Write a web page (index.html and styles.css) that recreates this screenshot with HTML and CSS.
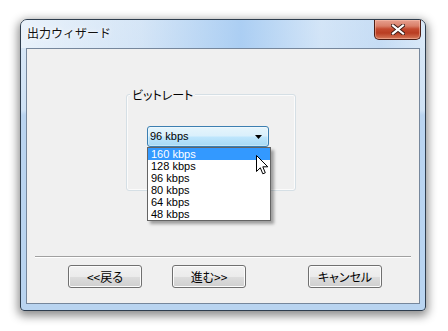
FILE: index.html
```html
<!DOCTYPE html>
<html lang="ja">
<head>
<meta charset="utf-8">
<link rel="stylesheet" href="styles.css">
</head>
<body>
<div class="window">
  <div class="titlebar">
    <span class="title">出力ウィザード</span>
    <div class="close">
      <svg width="14" height="11" viewBox="0 0 14 11">
        <path d="M2 1.5 L12 9.5 M12 1.5 L2 9.5" stroke="#3b1a14" stroke-width="4" stroke-linecap="square"/>
        <path d="M2 1.5 L12 9.5 M12 1.5 L2 9.5" stroke="#ffffff" stroke-width="2.2" stroke-linecap="square"/>
      </svg>
    </div>
  </div>
  <div class="client">
    <div class="group">
      <div class="legend">ビットレート</div>
      <div class="combo">
        <span class="combo-text">96 kbps</span>
        <svg class="arrow" width="7" height="4" viewBox="0 0 7 4"><path d="M0 0 H7 L3.5 4 Z" fill="#000"/></svg>
      </div>
    </div>
    <div class="sep"></div>
    <div class="buttons">
      <div class="btn back">&lt;&lt;戻る</div>
      <div class="btn next">進む&gt;&gt;</div>
      <div class="btn cancel">キャンセル</div>
    </div>
    <ul class="droplist">
      <li class="sel">160 kbps</li>
      <li>128 kbps</li>
      <li>96 kbps</li>
      <li>80 kbps</li>
      <li>64 kbps</li>
      <li>48 kbps</li>
    </ul>
    <svg class="cursor" width="13" height="20" viewBox="0 0 13 20">
      <path d="M0.5 0.5 L0.5 16.5 L4.3 12.8 L6.8 18.8 L9.3 17.8 L6.8 11.8 L11.8 11.8 Z" fill="#fff" stroke="#000" stroke-width="1" stroke-linejoin="miter"/>
    </svg>
  </div>
</div>
</body>
</html>
```
FILE: styles.css
```css
html, body {
  margin: 0;
  padding: 0;
  background: #ffffff;
}
body {
  width: 448px;
  height: 331px;
  overflow: hidden;
  font-family: "Liberation Sans", "Noto Sans CJK JP", sans-serif;
  font-size: 12px;
}
.window {
  box-sizing: border-box;
  width: 406px;
  height: 292px;
  margin: 19px 0 0 20px;
  border: 1px solid #2e3d4e;
  border-radius: 7px 7px 4px 4px;
  padding: 0 5px 6px 5px;
  background: linear-gradient(to bottom, #dae8f6 0px, #cfe2f5 90px, #bad4f0 95px, #b9d4f0 100%);
  box-shadow: 0 3px 10px 2px rgba(0, 0, 0, 0.45);
  display: flex;
  flex-direction: column;
}
.titlebar {
  height: 28px;
  margin: 0 -5px;
  padding: 0 4px 0 6px;
  display: flex;
  justify-content: space-between;
  align-items: flex-start;
  border-radius: 6px 6px 0 0;
  background: linear-gradient(to right, rgba(238,245,252,0.75) 0px, rgba(205,225,247,0.35) 120px, rgba(160,200,242,0.8) 220px, rgba(205,226,248,0.5) 300px, rgba(180,210,243,0.5) 360px, rgba(220,235,250,0.5) 404px);
}
.title {
  padding-top: 6px;
  line-height: 14px;
  font-family: "Noto Sans CJK JP", sans-serif;
  font-size: 12px;
  color: #111111;
  text-shadow: 0 0 6px #ffffff, 0 0 3px #ffffff;
}
.close {
  box-sizing: border-box;
  width: 47px;
  height: 20px;
  border: 1px solid #4d1d14;
  border-top: none;
  border-radius: 0 0 5px 5px;
  background: linear-gradient(to bottom, #e7a090 0px, #d97f69 6px, #c44a2f 9px, #b93d22 13px, #cc6446 17px, #de8c6f 20px);
  box-shadow: inset 0 0 0 1px rgba(255, 200, 180, 0.45);
  display: flex;
  align-items: center;
  justify-content: center;
}
.close svg {
  margin-top: -1px;
}
.client {
  position: relative;
  box-sizing: border-box;
  height: 256px;
  border: 1px solid #76879c;
  background: #f0f0f0;
  display: flex;
  flex-direction: column;
}
.group {
  box-sizing: border-box;
  width: 170px;
  height: 97px;
  margin: 45px 0 0 99px;
  border: 1px solid #d5dfe5;
  border-radius: 3px;
  box-shadow: inset 0 0 0 1px #fbfbfb;
  display: flex;
  flex-direction: column;
  align-items: flex-start;
}
.legend {
  margin: -7px 0 0 3px;
  padding: 0 2px;
  line-height: 13px;
  height: 13px;
  background: #f0f0f0;
  font-family: "Noto Sans CJK JP", sans-serif;
  font-size: 12px;
  font-feature-settings: "palt";
  color: #000;
}
.combo {
  box-sizing: border-box;
  width: 122px;
  height: 21px;
  margin: 25px 0 0 20px;
  border: 1px solid #3c7fb1;
  border-radius: 3px;
  background: linear-gradient(to bottom, #e6f5fc 0px, #d9f0fc 9px, #bee6fd 10px, #a6d9f4 19px);
  box-shadow: inset 0 0 0 1px rgba(255,255,255,0.35);
  display: flex;
  align-items: center;
  justify-content: space-between;
  padding: 0 6px 0 2px;
}
.combo-text {
  color: #000;
  font-size: 11px;
  line-height: 13px;
}
.sep {
  height: 1px;
  margin: 65px 8px 0 8px;
  background: #a0a0a0;
  border-bottom: 1px solid #ffffff;
}
.buttons {
  display: flex;
  margin-top: 7px;
  padding-left: 41px;
}
.btn {
  box-sizing: border-box;
  width: 74px;
  height: 23px;
  border: 1px solid #707070;
  border-radius: 3px;
  background: linear-gradient(to bottom, #f2f2f2 0%, #ebebeb 50%, #dddddd 51%, #cfcfcf 100%);
  box-shadow: inset 0 0 0 1px #fcfcfc;
  display: flex;
  align-items: center;
  justify-content: center;
  font-family: "Noto Sans CJK JP", sans-serif;
  font-size: 12px;
  font-feature-settings: "palt";
  color: #000;
  line-height: 14px;
}
.next {
  margin-left: 30px;
}
.cancel {
  margin-left: 62px;
}
.droplist {
  position: absolute;
  left: 120px;
  top: 98px;
  box-sizing: border-box;
  width: 124px;
  height: 74px;
  margin: 0;
  padding: 0;
  list-style: none;
  border: 1px solid #646464;
  background: #ffffff;
  box-shadow: 3px 3px 3px rgba(0, 0, 0, 0.35);
}
.droplist li {
  height: 12px;
  line-height: 12px;
  padding-left: 3px;
  color: #000;
  font-size: 11px;
}
.droplist li.sel {
  background: #3399ff;
  color: #ffffff;
}
.cursor {
  position: absolute;
  left: 229px;
  top: 106px;
}
```
